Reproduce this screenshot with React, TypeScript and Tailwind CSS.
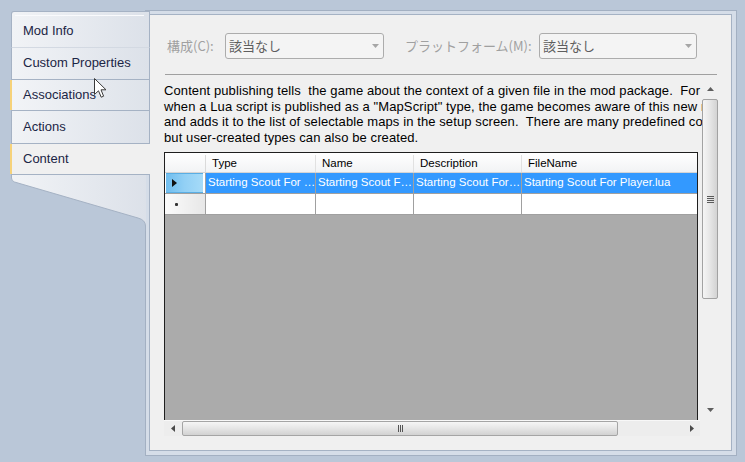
import React from "react";

function TriDown({ color }: { color: string }) {
  return (
    <svg width="7" height="4" viewBox="0 0 7 4" className="block">
      <path d="M0 0H7L3.5 4Z" fill={color} />
    </svg>
  );
}
function TriUp({ color }: { color: string }) {
  return (
    <svg width="7" height="4" viewBox="0 0 7 4" className="block">
      <path d="M0 4H7L3.5 0Z" fill={color} />
    </svg>
  );
}
function TriLeft({ color }: { color: string }) {
  return (
    <svg width="4" height="7" viewBox="0 0 4 7" className="block">
      <path d="M4 0V7L0 3.5Z" fill={color} />
    </svg>
  );
}
function TriRight({ color }: { color: string }) {
  return (
    <svg width="4" height="7" viewBox="0 0 4 7" className="block">
      <path d="M0 0V7L4 3.5Z" fill={color} />
    </svg>
  );
}

function Tabs() {
  return (
    <div className="relative z-10 w-[140px] mr-[-5px] mt-[1px] shrink-0 flex flex-col">
      <div className="ml-[1px] w-[139px] flex flex-col text-[13px] text-[#1b2545]">
        <div className="relative h-[37px] pt-[3px] flex items-center pl-[11px] border-l border-t border-r border-b border-[#a5b2c4] border-b-[#d3d9e2] rounded-tl-[3px] bg-linear-to-r from-[#f1f3f6] to-[#dce1e9]">
          <div className="absolute left-[3px] right-[5px] top-[3px] h-px bg-[#f9fafc]" />
          Mod Info
        </div>
        <div className="relative h-[32px] pb-[1px] flex items-center pl-[11px] border-l border-r border-b border-[#a5b2c4] bg-linear-to-r from-[#f1f3f6] to-[#dce1e9]">
          Custom Properties
        </div>
        <div className="relative h-[31px] flex items-center pl-[11px] border-l border-r border-b border-[#a5b2c4] bg-linear-to-r from-[#f2f4f7] to-[#dee3ea]">
          <div className="absolute left-[-2px] top-0 bottom-0 w-[2px] bg-[#f6d27a]" />
          Associations
        </div>
        <div className="relative h-[33px] flex items-center pl-[11px] border-l border-r border-b border-[#a5b2c4] bg-linear-to-r from-[#f1f3f6] to-[#dce1e9]">
          Actions
        </div>
        <div className="relative h-[31px] flex items-center pl-[11px] border-l border-b border-[#a5b2c4] bg-[#f0f0f0]">
          <div className="absolute left-[-2px] top-0 bottom-0 w-[2px] bg-[#f6d27a]" />
          Content
        </div>
      </div>
      <svg width="136" height="56" viewBox="0 0 136 56" className="block">
        <defs>
          <linearGradient id="tabgrad" x1="0" x2="1" y1="0" y2="0">
            <stop offset="0" stopColor="#f1f3f6" />
            <stop offset="1" stopColor="#dce1e9" />
          </linearGradient>
        </defs>
        <path
          d="M1.5 0 V3 Q1.5 6 4.5 7 L128 43 Q135.5 45 135.5 51 V56 H136 V0 Z"
          fill="url(#tabgrad)"
        />
        <path
          d="M1.5 0 V3 Q1.5 6 4.5 7 L128 43 Q135.5 45 135.5 51 V56"
          fill="none"
          stroke="#a5b2c4"
        />
      </svg>
    </div>
  );
}

function VScroll() {
  return (
    <div className="w-[16px] h-[338px] shrink-0 bg-[#f0f0f0] flex flex-col">
      <div className="h-[17px] shrink-0 flex items-center justify-center">
        <TriUp color="#5e5e5e" />
      </div>
      <div className="mt-[2px] h-[200px] shrink-0 rounded-[2px] border border-[#a2a2a2] bg-linear-to-r from-[#f5f5f5] via-[#e6e6e6] to-[#d3d3d3] flex flex-col items-center justify-center gap-[1px]">
        <div className="w-[7px] h-px bg-[#5a5a5a]" />
        <div className="w-[7px] h-px bg-[#5a5a5a]" />
        <div className="w-[7px] h-px bg-[#5a5a5a]" />
        <div className="w-[7px] h-px bg-[#5a5a5a]" />
      </div>
      <div className="flex-1" />
      <div className="h-[17px] shrink-0 flex items-center justify-center">
        <TriDown color="#5e5e5e" />
      </div>
    </div>
  );
}

function HScroll() {
  return (
    <div className="ml-[1px] w-[536px] h-[16px] flex bg-[#ededed] border-t border-[#f8f8f8]">
      <div className="w-[17px] shrink-0 flex items-center justify-center">
        <TriLeft color="#4a4a4a" />
      </div>
      <div className="ml-[1px] w-[436px] shrink-0 h-full rounded-[2px] border border-[#a5a5a5] bg-linear-to-b from-[#f6f6f6] via-[#e5e5e5] to-[#d2d2d2] flex items-center justify-center gap-[1px]">
        <div className="w-px h-[7px] bg-[#555555]" />
        <div className="w-px h-[7px] bg-[#555555]" />
        <div className="w-px h-[7px] bg-[#555555]" />
      </div>
      <div className="flex-1" />
      <div className="w-[17px] shrink-0 flex items-center justify-center">
        <TriRight color="#4a4a4a" />
      </div>
    </div>
  );
}

function Grid() {
  return (
    <div className="ml-[1px] w-[534px] h-[268px] shrink-0 border-t border-x border-[#1f1f1f] bg-[#ababab] flex flex-col text-[11.5px] overflow-hidden">
      <div className="flex h-[20px] shrink-0 pt-[2px] bg-linear-to-b from-white to-[#f2f3f5] border-b border-[#d5d5d5] text-black">
        <div className="w-[41px] shrink-0 border-r border-[#dadada]" />
        <div className="w-[110px] shrink-0 border-r border-[#e1e1e1] pl-[6px] flex items-center">Type</div>
        <div className="w-[98px] shrink-0 border-r border-[#e1e1e1] pl-[6px] flex items-center">Name</div>
        <div className="w-[108px] shrink-0 border-r border-[#e1e1e1] pl-[6px] flex items-center">Description</div>
        <div className="flex-1 pl-[6px] flex items-center">FileName</div>
      </div>
      <div className="flex h-[21px] shrink-0 text-white whitespace-nowrap">
        <div className="w-[41px] shrink-0 border-r border-b border-[#a0a0a0] bg-white pl-[1px] pr-[2px]">
          <div className="h-full bg-linear-to-r from-[#6fbdee] via-[#92d0f5] to-[#a6dbf8] border-y border-[#5aaee4] flex items-center pl-[6px]">
            <svg width="5" height="8" viewBox="0 0 5 8" className="block">
              <path d="M0 0V8L5 4Z" fill="#111111" />
            </svg>
          </div>
        </div>
        <div className="w-[110px] shrink-0 border-r border-b border-[#a0a0a0] bg-[#3399ff] pl-[2px] flex items-center overflow-hidden">
          {"Starting Scout For \u2026"}
        </div>
        <div className="w-[98px] shrink-0 border-r border-b border-[#a0a0a0] bg-[#3399ff] pl-[2px] flex items-center overflow-hidden">
          {"Starting Scout F\u2026"}
        </div>
        <div className="w-[108px] shrink-0 border-r border-b border-[#a0a0a0] bg-[#3399ff] pl-[2px] flex items-center overflow-hidden">
          {"Starting Scout For\u2026"}
        </div>
        <div className="flex-1 border-b border-[#a0a0a0] bg-[#3399ff] pl-[2px] flex items-center overflow-hidden">
          Starting Scout For Player.lua
        </div>
      </div>
      <div className="flex h-[21px] shrink-0">
        <div className="w-[41px] shrink-0 border-r border-b border-[#a0a0a0] bg-linear-to-r from-[#fbfbfb] to-[#e7e7e7] flex items-center pl-[10px]">
          <div className="w-[3px] h-[3px] rounded-[1px] bg-[#333333]" />
        </div>
        <div className="w-[110px] shrink-0 border-r border-b border-[#a0a0a0] bg-white" />
        <div className="w-[98px] shrink-0 border-r border-b border-[#a0a0a0] bg-white" />
        <div className="w-[108px] shrink-0 border-r border-b border-[#a0a0a0] bg-white" />
        <div className="flex-1 border-b border-[#a0a0a0] bg-white" />
      </div>
    </div>
  );
}

function Panel() {
  return (
    <div className="flex-1 border border-[#a5b2c4] bg-[#f0f0f0] flex flex-col">
      <div className="mt-[18px] pl-[17px] flex items-center h-[26px] font-['Noto_Sans_CJK_JP',sans-serif] text-[13px]">
        <div className="w-[58px] shrink-0 text-[#a0a0a0]">構成(C):</div>
        <div className="w-[159px] h-[26px] shrink-0 border border-[#acacac] rounded-[3px] bg-[#f4f4f4] flex items-center justify-between pl-[3px] pr-[4px] text-[#5e5e5e]">
          <span>該当なし</span>
          <TriDown color="#a6a6a6" />
        </div>
        <div className="ml-[21px] w-[134px] shrink-0 text-[#a0a0a0]">プラットフォーム(M):</div>
        <div className="w-[158px] h-[26px] shrink-0 border border-[#acacac] rounded-[3px] bg-[#f4f4f4] flex items-center justify-between pl-[3px] pr-[4px] text-[#5e5e5e]">
          <span>該当なし</span>
          <TriDown color="#a6a6a6" />
        </div>
      </div>
      <div className="mt-[15px] ml-[15px] w-[552px] h-px bg-[#a0a0a0]" />
      <div className="mt-[5px] ml-[13px] flex h-[356px]">
        <div className="w-[539px] shrink-0 overflow-hidden flex flex-col">
          <div className="h-[72px] shrink-0 pt-[3px] pl-[1px] text-[13px] leading-[15.6px] tracking-[0.1px] text-black whitespace-pre">
            <div>{"Content publishing tells  the game about the context of a given file in the mod package.  For example,"}</div>
            <div>{"when a Lua script is published as a \"MapScript\" type, the game becomes aware of this new map script"}</div>
            <div>{"and adds it to the list of selectable maps in the setup screen.  There are many predefined content types"}</div>
            <div>{"but user-created types can also be created."}</div>
          </div>
          <Grid />
          <HScroll />
        </div>
        <VScroll />
      </div>
    </div>
  );
}

function Frame() {
  return (
    <div className="w-[592px] h-[446px] shrink-0 border border-[#a3b0c2] bg-[#d5dde8] pt-[3px] pl-[3px] pr-[4px] pb-[4px] flex">
      <Panel />
    </div>
  );
}

function Cursor() {
  return (
    <svg
      width="14"
      height="22"
      viewBox="0 0 14 22"
      className="absolute left-[94px] top-[78px] z-20"
    >
      <path
        d="M0.5 0.5 L0.5 16.5 L4.5 12.8 L7.2 19.2 L9.6 18.2 L7 11.8 L12 11.8 Z"
        fill="#ffffff"
        stroke="#3a3a3a"
        strokeWidth="1"
        strokeLinejoin="miter"
      />
    </svg>
  );
}

export default function App() {
  return (
    <div className="relative w-[745px] h-[462px] overflow-hidden bg-[#bac7d8] font-['Liberation_Sans',Arial,sans-serif]">
      <div className="flex items-start pt-[10px] pl-[10px]">
        <Tabs />
        <Frame />
      </div>
      <Cursor />
    </div>
  );
}
